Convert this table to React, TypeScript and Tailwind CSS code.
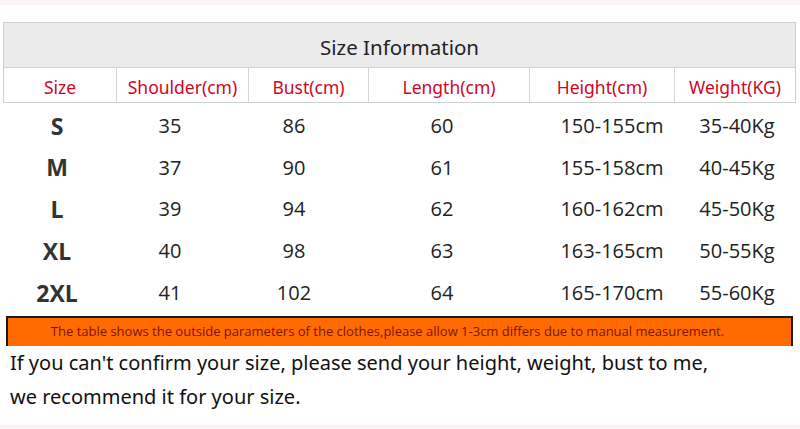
const headers = [
  "Size",
  "Shoulder(cm)",
  "Bust(cm)",
  "Length(cm)",
  "Height(cm)",
  "Weight(KG)",
];

const rows = [
  ["S", "35", "86", "60", "150-155cm", "35-40Kg"],
  ["M", "37", "90", "61", "155-158cm", "40-45Kg"],
  ["L", "39", "94", "62", "160-162cm", "45-50Kg"],
  ["XL", "40", "98", "63", "163-165cm", "50-55Kg"],
  ["2XL", "41", "102", "64", "165-170cm", "55-60Kg"],
];

const comic = "font-['Comic_Sans_MS','Noto_Sans',sans-serif]";

const App = () => {
  return (
    <div className="w-[800px] h-[429px] overflow-hidden bg-white flex flex-col">
      {/* faint top stripe */}
      <div className="h-[5px] bg-[#fcf4f2]" />
      <div className="h-[17px]" />

      {/* table header */}
      <div className={`ml-[3px] w-[793px] border border-[#cfcfcf] ${comic}`}>
        <div className="h-[45px] bg-[#ebebeb] border-b border-[#d0d0d0] flex items-center justify-center pt-[4px] text-[20.5px] text-[#222]">
          Size Information
        </div>
        <div className="grid grid-cols-[112px_132px_120px_161px_145px_121px] h-[34px]">
          {headers.map((h, i) => (
            <div
              key={i}
              className={`flex items-center justify-center pt-[4px] text-[17.5px] text-[#d0061f] whitespace-nowrap ${
                i > 0 ? "border-l border-[#d6d6d6]" : ""
              }`}
            >
              {h}
            </div>
          ))}
        </div>
      </div>

      {/* data rows */}
      <div className="pt-[2px] font-['Open_Sans',sans-serif] text-[#222]">
        {rows.map((row, r) => (
          <div
            key={r}
            className="grid grid-cols-[114px_112px_136px_160px_180px_70px] h-[41.8px]"
          >
            {row.map((cell, i) => (
              <div
                key={i}
                className={`flex items-center justify-center whitespace-nowrap ${
                  i === 0
                    ? "font-bold text-[23px] text-[#333]"
                    : "text-[20px]"
                }`}
              >
                {cell}
              </div>
            ))}
          </div>
        ))}
      </div>

      {/* orange notice bar */}
      <div className="ml-[6px] mt-[2px] w-[787px] h-[30px] border-t-2 border-x-2 border-[#1a1a1a] bg-[#ff6b00] flex items-center justify-center pr-[24px] font-['Open_Sans',sans-serif] text-[13px] text-[#7a1608]">
        The table shows the outside parameters of the clothes,please allow
        1-3cm differs due to manual measurement.
      </div>

      {/* bottom note */}
      <div className={`pl-[10px] text-[20px] text-[#111] ${comic}`}>
        <p className="h-[34px] leading-[34px] whitespace-nowrap">
          If you can't confirm your size, please send your height, weight, bust
          to me,
        </p>
        <p className="h-[34px] leading-[34px]">
          we recommend it for your size.
        </p>
      </div>
      <div className="mt-auto h-[4px] bg-[#fcf4f2]" />
    </div>
  );
};

export default App;
